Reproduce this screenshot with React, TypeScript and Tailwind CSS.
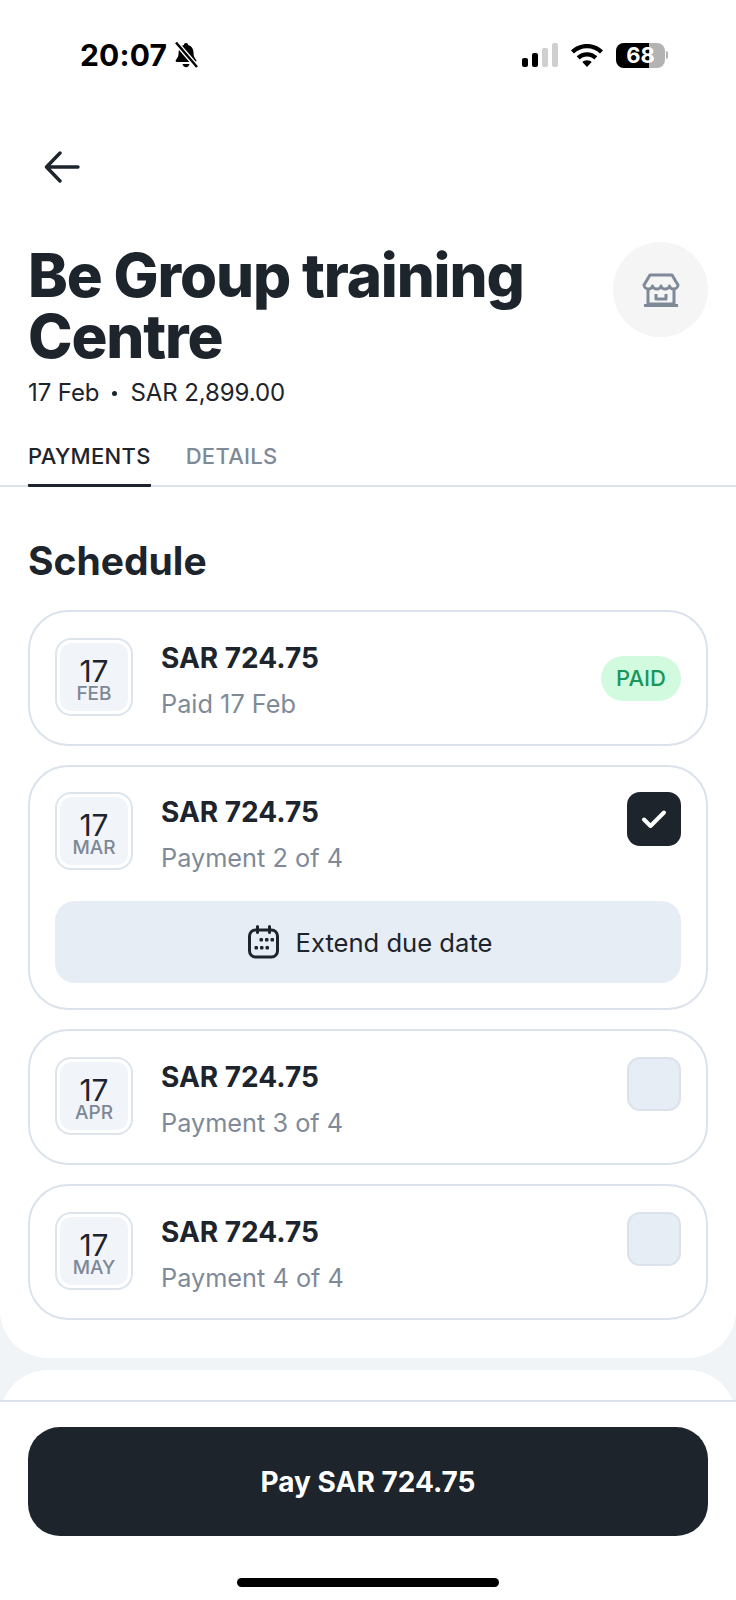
import React from 'react';

const ink = 'text-[#1d242c]';

const payments = [
  { month: 'FEB', sub: 'Paid 17 Feb', state: 'paid' },
  { month: 'MAR', sub: 'Payment 2 of 4', state: 'checked' },
  { month: 'APR', sub: 'Payment 3 of 4', state: 'empty' },
  { month: 'MAY', sub: 'Payment 4 of 4', state: 'empty' },
];

const StatusBar: React.FC = () => (
  <div className="h-[110px] flex items-start justify-between pl-[80px] pr-[68px] pt-[37px]">
    <div className="flex items-center gap-[6px]">
      <span className="text-[30px] leading-[36px] font-bold text-black tracking-[0.2px]">20:07</span>
      <svg width="26" height="28" viewBox="0 0 26 28" fill="black">
        <path d="M13 2c1.2 0 2 .8 2.2 1.9 3.4.9 5.3 3.8 5.3 7.6 0 3.600.9 5.300 2.600 7.300.7.9.2 2.200-1 2.200H4c-1.300 0-1.800-1.300-1-2.200 1.700-2 2.600-3.700 2.600-7.300 0-3.800 1.800-6.700 5.200-7.600C11 2.800 11.800 2 13 2z" />
        <path d="M9.500 23h7c-.3 2-1.700 3.200-3.500 3.200S9.800 25 9.500 23z" />
        <path d="M3 1.500 24 26" stroke="white" strokeWidth="5" />
        <path d="M3 1.500 24 26" stroke="black" strokeWidth="2.400" />
      </svg>
    </div>
    <div className="flex items-center h-[36px]">
      <div className="flex items-end gap-[4px] h-[24px] mr-[12px] -ml-[4px]">
        <div className="w-[6px] h-[9px] rounded-[2px] bg-black" />
        <div className="w-[6px] h-[14px] rounded-[2px] bg-black" />
        <div className="w-[6px] h-[19px] rounded-[2px] bg-[#cfcfcf]" />
        <div className="w-[6px] h-[24px] rounded-[2px] bg-[#cfcfcf]" />
      </div>
      <svg width="34" height="24" viewBox="0 0 34 24" fill="black" className="mr-[12px]">
        <path d="M17 1c6.200 0 11.900 2.400 16 6.400l-3 3.100C26.700 7.200 22.100 5.200 17 5.200S7.300 7.200 4 10.500L1 7.400C5.100 3.400 10.800 1 17 1z" />
        <path d="M17 9.200c4 0 7.600 1.600 10.300 4.100l-3 3.100c-1.900-1.800-4.500-2.900-7.300-2.900s-5.400 1.100-7.300 2.900l-3-3.100C9.400 10.800 13 9.200 17 9.200z" />
        <path d="M17 17.200c1.900 0 3.500.7 4.700 1.900L17 24l-4.700-4.900c1.200-1.200 2.800-1.900 4.700-1.900z" />
      </svg>
      <div className="relative w-[49px] h-[25px] rounded-[8px] overflow-hidden bg-[#b3b3b3]">
        <div className="h-full w-[33px] bg-black" />
        <span className="absolute inset-0 flex items-center justify-center text-[22px] font-bold text-white">68</span>
      </div>
      <div className="w-[2px] h-[8px] ml-[1px] rounded-r-full bg-[#b3b3b3]" />
    </div>
  </div>
);

const DateTile: React.FC<{ month: string }> = ({ month }) => (
  <div className="w-[78px] h-[78px] shrink-0 rounded-[16px] border-2 border-[#dde4ec] bg-white p-[3px]">
    <div className={`h-full rounded-[12px] bg-[#f1f4f8] flex flex-col items-center justify-center pt-[8px] ${ink}`}>
      <span className="text-[30px] leading-[26px] font-normal">17</span>
      <span className="text-[19px] leading-[20px] font-medium text-[#7d8896]">{month}</span>
    </div>
  </div>
);

const PaymentCard: React.FC<{ month: string; sub: string; state: string }> = ({ month, sub, state }) => (
  <div className={state === 'checked' ? 'rounded-[40px] border-2 border-[#dbe2eb] bg-white px-[25px] pt-[25px] pb-[25px]' : 'rounded-[40px] border-2 border-[#dbe2eb] bg-white px-[25px] pt-[26px] pb-[28px]'}>
    <div className="flex items-start">
      <DateTile month={month} />
      <div className="ml-[28px] flex-1">
        <div className={`mt-[2px] text-[28px] leading-[36px] font-bold ${ink}`}>SAR 724.75</div>
        <div className="mt-[16px] text-[25.300px] leading-[24px] text-[#7f8a98]">{sub}</div>
      </div>
      {state === 'paid' && (
        <div className="mt-[18px] w-[80px] h-[45px] rounded-full bg-[#d1fadf] flex items-center justify-center text-[22px] font-medium text-[#17975b]">
          PAID
        </div>
      )}
      {state === 'checked' && (
        <div className="w-[54px] h-[54px] rounded-[13px] bg-[#1d242c] flex items-center justify-center">
          <svg width="26" height="20" viewBox="0 0 26 20" fill="none" stroke="white" strokeWidth="4" strokeLinecap="round" strokeLinejoin="round">
            <path d="M3 10.500 9.500 17 23 3.500" />
          </svg>
        </div>
      )}
      {state === 'empty' && (
        <div className="w-[54px] h-[54px] rounded-[13px] bg-[#e7edf5] border-2 border-[#dbe2eb]" />
      )}
    </div>
    {state === 'checked' && (
      <div className={`mt-[31px] h-[82px] pl-[3px] rounded-[20px] bg-[#e7edf5] flex items-center justify-center gap-[16px] text-[25.600px] font-normal ${ink}`}>
        <svg width="33" height="34" viewBox="0 0 32 34" fill="none" stroke="#1d242c" strokeWidth="3" strokeLinecap="round">
          <rect x="2" y="5" width="28" height="27" rx="6" />
          <path d="M10 1.500v6M22 1.500v6" />
          <g fill="#1d242c" stroke="none">
            <rect x="12" y="13" width="3.500" height="3.500" rx="1" />
            <rect x="17.500" y="13" width="3.500" height="3.500" rx="1" />
            <rect x="23" y="13" width="3.500" height="3.500" rx="1" />
            <rect x="7" y="21" width="3.500" height="3.500" rx="1" />
            <rect x="12.500" y="21" width="3.500" height="3.500" rx="1" />
            <rect x="18" y="21" width="3.500" height="3.500" rx="1" />
          </g>
        </svg>
        <span className="mt-[3px]">Extend due date</span>
      </div>
    )}
  </div>
);

export default function App() {
  return (
    <div className="w-[736px] h-[1600px] overflow-hidden bg-white flex flex-col font-['Inter',sans-serif]">
      <div className="h-[1400px] shrink-0 overflow-hidden bg-[#f1f4f7]">
        <div className="h-[1358px] bg-white rounded-b-[48px]">
          <StatusBar />
          <div className="px-[28px] pt-[41px]">
            <svg width="36" height="32" viewBox="0 0 36 32" fill="none" stroke="#1d242c" strokeWidth="3.400" strokeLinecap="round" strokeLinejoin="round" className="ml-[16px]">
              <path d="M34 16H3M16 2 2.500 16 16 30" />
            </svg>
          </div>
          <div className="px-[28px] mt-[62px] flex items-start justify-between">
            <div>
              <h1 className={`text-[60px] leading-[61px] font-extrabold tracking-[-1.150px] ${ink}`}>
                Be Group training
                <br />
                Centre
              </h1>
              <div className={`mt-[10px] flex items-center text-[24px] leading-[32px] tracking-[-0.1px] ${ink}`}>
                <span>17 Feb</span>
                <span className="mx-[13px] w-[5px] h-[5px] rounded-full bg-[#1d242c]" />
                <span>SAR 2,899.00</span>
              </div>
            </div>
            <div className="w-[95px] h-[95px] rounded-full bg-[#f5f5f5] flex items-center justify-center shrink-0 -mt-[3px]">
              <svg width="38" height="36" viewBox="0 0 38 34" fill="none" stroke="#7f8a98" strokeWidth="3" strokeLinejoin="round">
                <path d="M8 2h22l6 10c0 2.500-2.500 4-4.500 4-2 0-3.500-1-4-3-.5 2-2.500 3-4.500 3s-3.500-1-4-3c-.5 2-2 3-4 3s-4-1-4.500-3c-.5 2-2 3-4 3S2 14.500 2 12z" />
                <path d="M6 16v15h26V16M2 32.500h34" />
                <path d="M14 21v5h10v-5" />
              </svg>
            </div>
          </div>
          <div className="mt-[28px] border-b-2 border-[#dbe2eb] px-[28px] flex gap-[35px] text-[22px] font-medium h-[50px]">
            <div className={`h-[50px] border-b-[3px] border-[#1d242c] rounded-b-[1px] leading-[38px] tracking-[0.3px] ${ink}`}>PAYMENTS</div>
            <div className="leading-[38px] tracking-[0.3px] text-[#7f8a98]">DETAILS</div>
          </div>
          <div className="px-[28px] pt-[51px]">
            <h2 className={`text-[39px] leading-[46px] font-bold ${ink}`}>Schedule</h2>
            <div className="mt-[26px] flex flex-col gap-[19px]">
              {payments.map((p) => (
                <PaymentCard key={p.month} {...p} />
              ))}
            </div>
          </div>
        </div>
        <div className="mt-[12px] h-[60px] bg-white rounded-t-[48px]" />
      </div>
      <div className="flex-1 border-t-2 border-[#dbe2eb] bg-white px-[28px] pt-[25px] flex flex-col items-center">
        <div className="w-full h-[109px] rounded-[32px] bg-[#1d242c] flex items-center justify-center text-[28px] font-bold text-white">
          Pay SAR 724.75
        </div>
        <div className="mt-[42px] w-[262px] h-[9px] rounded-full bg-black" />
      </div>
    </div>
  );
}
